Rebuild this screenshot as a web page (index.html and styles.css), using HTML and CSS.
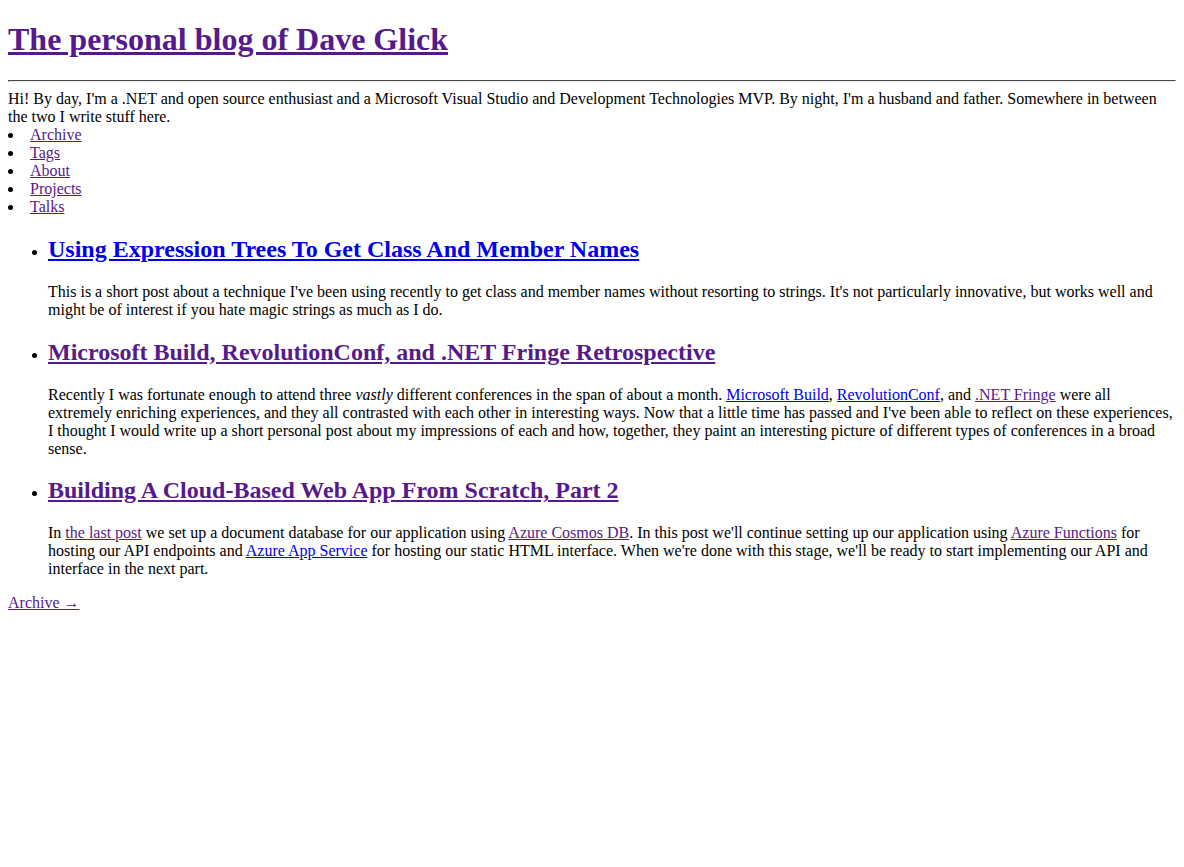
FILE: index.html
```html
<!DOCTYPE html>
<html lang="en">
<head>
<meta charset="utf-8">
<title>Dave Glick</title>
<link rel="stylesheet" href="styles.css">
</head>
<body class="page">
<header class="site-header">
  <h1 class="site-title"><a class="visited" href="#home">The personal blog of Dave Glick</a></h1>
  <hr class="divider">
  <div class="intro">Hi! By day, I'm a .NET and open source enthusiast and a Microsoft Visual Studio and Development Technologies MVP. By night, I'm a husband and father. Somewhere in between the two I write stuff here.</div>
  <ul class="nav">
    <li><a class="visited" href="#archive">Archive</a></li>
    <li><a class="visited" href="#tags">Tags</a></li>
    <li><a class="visited" href="#about">About</a></li>
    <li><a class="visited" href="#projects">Projects</a></li>
    <li><a class="visited" href="#talks">Talks</a></li>
  </ul>
</header>
<ul class="posts">
  <li>
    <h2 class="post-title"><a class="unvisited" href="#p1">Using Expression Trees To Get Class And Member Names</a></h2>
    <p class="post-lead">This is a short post about a technique I've been using recently to get class and member names without resorting to strings. It's not particularly innovative, but works well and might be of interest if you hate magic strings as much as I do.</p>
  </li>
  <li>
    <h2 class="post-title"><a class="visited" href="#p2">Microsoft Build, RevolutionConf, and .NET Fringe Retrospective</a></h2>
    <p class="post-lead">Recently I was fortunate enough to attend three <em>vastly</em> different conferences in the span of about a month. <a class="unvisited" href="#build">Microsoft Build</a>, <a class="unvisited" href="#rc">RevolutionConf</a>, and <a class="visited" href="#fringe">.NET Fringe</a> were all extremely enriching experiences, and they all contrasted with each other in interesting ways. Now that a little time has passed and I've been able to reflect on these experiences, I thought I would write up a short personal post about my impressions of each and how, together, they paint an interesting picture of different types of conferences in a broad sense.</p>
  </li>
  <li>
    <h2 class="post-title"><a class="visited" href="#p3">Building A Cloud-Based Web App From Scratch, Part 2</a></h2>
    <p class="post-lead">In <a class="visited" href="#last">the last post</a> we set up a document database for our application using <a class="visited" href="#cosmos">Azure Cosmos DB</a>. In this post we'll continue setting up our application using <a class="visited" href="#functions">Azure Functions</a> for hosting our API endpoints and <a class="unvisited" href="#appservice">Azure App Service</a> for hosting our static HTML interface. When we're done with this stage, we'll be ready to start implementing our API and interface in the next part.</p>
  </li>
</ul>
<div class="more"><a class="visited" href="#archive">Archive →</a></div>
</body>
</html>
```
FILE: styles.css
```css
html { margin: 0; padding: 0; }
.page {
  margin: 0 8px 8px;
  font-family: "Liberation Serif", "Times New Roman", serif;
  font-size: 16px;
  color: #000;
  background: #fff;
}
.visited { color: #551a8b; }
.unvisited { color: #0000ee; }
.site-title {
  font-size: 2em;
  margin: 0.67em 0;
}
.divider {
  margin: 8px 0;
  border: 1px inset #eee;
  border-color: #9a9a9a #eee #eee #9a9a9a;
}
.intro { margin: 0; }
.nav {
  margin: 0;
  padding: 0;
  list-style-position: inside;
}
.posts {
  margin: 16px 0;
  padding-left: 40px;
}
.post-title {
  font-size: 1.5em;
  margin: 0.83em 0;
}
.post-lead { margin: 16px 0; }
.more { margin: 0; }
```
